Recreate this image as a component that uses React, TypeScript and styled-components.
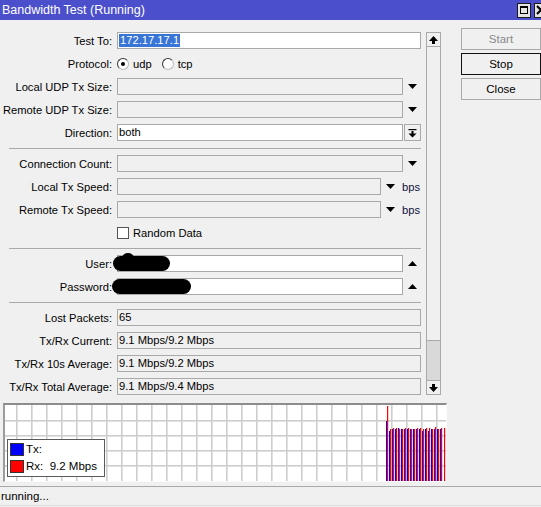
import React from "react";
import styled, { createGlobalStyle } from "styled-components";

const Global = createGlobalStyle`
  html, body { margin: 0; padding: 0; background: #f0f0f0; }
  * { box-sizing: border-box; }
`;

// tx / rx heights (px of a 76px tall plot)
const bars: [number, number][] = [
  [60, 75], [50, 52], [52, 53], [52, 53], [53, 52], [52, 52], [52, 53], [52, 53],
  [52, 52], [52, 52], [52, 53], [52, 53], [50, 52], [52, 53], [50, 53], [52, 52],
  [52, 54], [52, 52], [52, 53], [0, 53],
];

function DownArrow() {
  return (
    <svg width="9" height="6" viewBox="0 0 9 6">
      <polygon points="0,0 9,0 4.5,5" fill="#000" />
    </svg>
  );
}

function UpArrow() {
  return (
    <svg width="9" height="6" viewBox="0 0 9 6">
      <polygon points="0,5 9,5 4.5,0" fill="#000" />
    </svg>
  );
}

function BoldArrow({ down }: { down?: boolean }) {
  return (
    <svg width="9" height="8" viewBox="0 0 9 8" style={{ transform: down ? "rotate(180deg)" : undefined }}>
      <polygon points="4.5,0 9,5 6,5 6,8 3,8 3,5 0,5" fill="#000" />
    </svg>
  );
}

function DropAllIcon() {
  return (
    <svg width="9" height="10" viewBox="0 0 9 10">
      <rect x="0.5" y="1" width="8" height="1.2" fill="#000" />
      <rect x="3.5" y="3" width="2" height="3" fill="#000" />
      <polygon points="0.5,5.5 8.5,5.5 4.5,9.5" fill="#000" />
    </svg>
  );
}

function CloseGlyph() {
  return (
    <svg width="10" height="10" viewBox="0 0 10 10">
      <path d="M1 1 L9 9 M9 1 L1 9" stroke="#000" strokeWidth="2" />
    </svg>
  );
}

export default function App() {
  return (
    <Window>
      <Global />
      <TitleBar>
        <span>Bandwidth Test (Running)</span>
        <TitleButtons>
          <TitleBtn><MaxBox /></TitleBtn>
          <TitleBtn><CloseGlyph /></TitleBtn>
        </TitleButtons>
      </TitleBar>

      <Body>
        <FormPane>
          <FormColumn>
            <Row>
              <Label>Test To:</Label>
              <Field $white>
                <Selected>172.17.17.1</Selected>
              </Field>
            </Row>
            <Row>
              <Label>Protocol:</Label>
              <Radios>
                <RadioItem><Radio $on />udp</RadioItem>
                <RadioItem><Radio />tcp</RadioItem>
              </Radios>
            </Row>
            <Row>
              <Label>Local UDP Tx Size:</Label>
              <FieldLine>
                <Field />
                <ArrowSlot><DownArrow /></ArrowSlot>
              </FieldLine>
            </Row>
            <Row>
              <Label>Remote UDP Tx Size:</Label>
              <FieldLine>
                <Field />
                <ArrowSlot><DownArrow /></ArrowSlot>
              </FieldLine>
            </Row>
            <Row>
              <Label>Direction:</Label>
              <FieldLine>
                <Field $white>both</Field>
                <BoxButton><DropAllIcon /></BoxButton>
              </FieldLine>
            </Row>
            <Separator />
            <Row>
              <Label>Connection Count:</Label>
              <FieldLine>
                <Field />
                <ArrowSlot><DownArrow /></ArrowSlot>
              </FieldLine>
            </Row>
            <Row>
              <Label>Local Tx Speed:</Label>
              <FieldLine>
                <Field />
                <ArrowSlot><DownArrow /></ArrowSlot>
                <Unit>bps</Unit>
              </FieldLine>
            </Row>
            <Row>
              <Label>Remote Tx Speed:</Label>
              <FieldLine>
                <Field />
                <ArrowSlot><DownArrow /></ArrowSlot>
                <Unit>bps</Unit>
              </FieldLine>
            </Row>
            <Row>
              <span />
              <CheckLine><Check />Random Data</CheckLine>
            </Row>
            <Separator />
            <Row>
              <Label>User:</Label>
              <FieldLine>
                <Field $white />
                <ArrowSlot><UpArrow /></ArrowSlot>
              </FieldLine>
              <Blob $left={113} $width={57} />
              <Bump $left={122} />
            </Row>
            <Row>
              <Label>Password:</Label>
              <FieldLine>
                <Field $white />
                <ArrowSlot><UpArrow /></ArrowSlot>
              </FieldLine>
              <Blob $left={112} $width={79} />
            </Row>
            <Separator />
            <Row>
              <Label>Lost Packets:</Label>
              <Field>65</Field>
            </Row>
            <Row>
              <Label>Tx/Rx Current:</Label>
              <Field>9.1 Mbps/9.2 Mbps</Field>
            </Row>
            <Row>
              <Label>Tx/Rx 10s Average:</Label>
              <Field>9.1 Mbps/9.2 Mbps</Field>
            </Row>
            <Row>
              <Label>Tx/Rx Total Average:</Label>
              <Field>9.1 Mbps/9.4 Mbps</Field>
            </Row>
          </FormColumn>
          <Scrollbar>
            <ScrollBtn><BoldArrow /></ScrollBtn>
            <Track><Thumb /></Track>
            <ScrollBtn><BoldArrow down /></ScrollBtn>
          </Scrollbar>
        </FormPane>

        <ButtonColumn>
          <Button disabled>Start</Button>
          <Button $focused>Stop</Button>
          <Button>Close</Button>
        </ButtonColumn>
      </Body>

      <Chart>
        <svg width="441" height="76" viewBox="0 0 441 76">
          {Array.from({ length: 29 }, (_, i) => (
            <rect key={"v" + i} x={11 + i * 15} y={0} width={1.6} height={76} fill="#cdcdcd" />
          ))}
          {[15, 30, 45, 60].map((y) => (
            <rect key={"h" + y} x={0} y={y} width={441} height={1.6} fill="#cdcdcd" />
          ))}
          {bars.map(([tx, rx], i) => (
            <g key={i}>
              {tx > 0 && <rect x={381 + i * 3} y={76 - tx} width={1.2} height={tx} fill="#0000ff" />}
              <rect x={382 + i * 3} y={76 - rx} width={1.2} height={rx} fill="#ff0000" />
            </g>
          ))}
        </svg>
        <Legend>
          <LegendRow><Swatch $color="#0000ff" />Tx:</LegendRow>
          <LegendRow><Swatch $color="#ff0000" />{"Rx:  9.2 Mbps"}</LegendRow>
        </Legend>
      </Chart>

      <Status>running...</Status>
    </Window>
  );
}

const Window = styled.div`
  width: 541px;
  height: 507px;
  background: #f0f0f0;
  display: flex;
  flex-direction: column;
  overflow: hidden;
  font-family: "Liberation Sans", Arial, sans-serif;
  font-size: 11.2px;
  color: #000;
`;

const TitleBar = styled.div`
  height: 20px;
  flex: none;
  display: flex;
  align-items: center;
  padding-left: 2px;
  background: #4b4fcc;
  color: #fff;
  font-size: 12.5px;
  overflow: hidden;
`;

const TitleButtons = styled.div`
  margin-left: auto;
  margin-right: -7px;
  display: flex;
  gap: 3px;
`;

const TitleBtn = styled.div`
  width: 14px;
  height: 15px;
  border: 1px solid #1a1a1a;
  background: #e4e4e4;
  display: flex;
  align-items: center;
  justify-content: center;
`;

const MaxBox = styled.div`
  width: 8px;
  height: 8px;
  border: 1px solid #000;
  border-top-width: 2px;
`;

const Body = styled.div`
  display: flex;
  padding-top: 7px;
`;

const FormPane = styled.div`
  width: 445px;
  display: flex;
`;

const FormColumn = styled.div`
  width: 426px;
  padding: 5px 5px 0 0;
  display: flex;
  flex-direction: column;
  gap: 6px;
`;

const Row = styled.div`
  position: relative;
  display: grid;
  grid-template-columns: 112px 1fr;
  column-gap: 5px;
  height: 17px;
  align-items: center;
`;

const Label = styled.span`
  text-align: right;
  white-space: nowrap;
`;

const Field = styled.div<{ $white?: boolean }>`
  flex: 1;
  height: 17px;
  border: 1px solid #a9a9a9;
  background: ${(p) => (p.$white ? "#fff" : "#f0f0f0")};
  padding: 0 1px;
  line-height: 15px;
  white-space: nowrap;
  overflow: hidden;
`;

const Selected = styled.span`
  background: #3875d7;
  color: #fff;
  padding: 0 1px;
  display: inline-block;
  height: 13px;
  line-height: 13px;
  margin-top: 1px;
`;

const FieldLine = styled.div`
  display: flex;
  align-items: center;
  height: 17px;
`;

const ArrowSlot = styled.div`
  width: 18px;
  height: 17px;
  display: flex;
  align-items: center;
  justify-content: center;
  padding-top: 1px;
`;

const Unit = styled.span`
  width: 22px;
  padding-left: 3px;
  color: #101040;
`;

const BoxButton = styled.div`
  width: 17px;
  height: 17px;
  margin-left: 1px;
  border: 1px solid #a9a9a9;
  background: #f0f0f0;
  display: flex;
  align-items: center;
  justify-content: center;
`;

const Radios = styled.div`
  display: flex;
  align-items: center;
  gap: 10px;
`;

const RadioItem = styled.label`
  display: flex;
  align-items: center;
  gap: 4px;
`;

const Radio = styled.span<{ $on?: boolean }>`
  width: 12px;
  height: 12px;
  border-radius: 50%;
  border: 1px solid #333;
  border-right-color: #bbb;
  border-bottom-color: #bbb;
  background: #fff;
  display: flex;
  align-items: center;
  justify-content: center;
  &::after {
    content: "";
    width: 4px;
    height: 4px;
    border-radius: 50%;
    background: ${(p) => (p.$on ? "#000" : "transparent")};
  }
`;

const CheckLine = styled.label`
  display: flex;
  align-items: center;
  gap: 4px;
`;

const Check = styled.span`
  width: 12px;
  height: 12px;
  border: 1px solid #555;
  background: #fff;
`;

const Separator = styled.div`
  height: 1px;
  margin: 1px 0 0 9px;
  background: #a9a9a9;
`;

const Blob = styled.div<{ $left: number; $width: number }>`
  position: absolute;
  left: ${(p) => p.$left}px;
  top: 1px;
  width: ${(p) => p.$width}px;
  height: 15px;
  background: #000;
  border-radius: 8px;
`;

const Bump = styled.div<{ $left: number }>`
  position: absolute;
  left: ${(p) => p.$left}px;
  top: -2px;
  width: 12px;
  height: 10px;
  background: #000;
  border-radius: 50%;
`;

const Scrollbar = styled.div`
  width: 15px;
  height: 363px;
  margin-top: 5px;
  display: flex;
  flex-direction: column;
  border-left: 1px solid #a9a9a9;
  border-right: 1px solid #a9a9a9;
`;

const ScrollBtn = styled.div`
  height: 15px;
  flex: none;
  display: flex;
  align-items: center;
  justify-content: center;
  background: #f0f0f0;
  border-top: 1px solid #a9a9a9;
  border-bottom: 1px solid #a9a9a9;
`;

const Track = styled.div`
  flex: 1;
  display: flex;
  flex-direction: column;
  background: #f0f0f0;
`;

const Thumb = styled.div`
  margin-top: auto;
  height: 40px;
  background: #d9d9d9;
  border-top: 1px solid #a9a9a9;
`;

const ButtonColumn = styled.div`
  margin-left: 17px;
  padding-top: 1px;
  display: flex;
  flex-direction: column;
  gap: 3px;
`;

const Button = styled.button<{ $focused?: boolean }>`
  width: 80px;
  height: 22px;
  padding: 0;
  border: 1px solid ${(p) => (p.$focused ? "#111" : "#a9a9a9")};
  background: #f0f0f0;
  font-family: "Liberation Sans", Arial, sans-serif;
  font-size: 11.5px;
  color: #000;
  &:disabled {
    color: #8a8a8a;
  }
`;

const Chart = styled.div`
  position: relative;
  margin: 8px 0 0 3px;
  width: 444px;
  height: 79px;
  flex: none;
  background: #fff;
  border-style: solid;
  border-width: 2px 1px 1px 2px;
  border-color: #8c8c8c #fafafa #fafafa #9c9c9c;
  svg {
    display: block;
  }
`;

const Legend = styled.div`
  position: absolute;
  left: 2px;
  top: 34px;
  width: 98px;
  height: 38px;
  background: #fff;
  border: 1px solid #5a5a5a;
  padding: 2px 0 0 2px;
  display: flex;
  flex-direction: column;
  gap: 3px;
`;

const LegendRow = styled.div`
  display: flex;
  align-items: center;
  gap: 2px;
  height: 14px;
  white-space: pre;
  font-size: 11.5px;
`;

const Swatch = styled.span<{ $color: string }>`
  width: 14px;
  height: 13px;
  background: ${(p) => p.$color};
  border: 1px solid #333;
`;

const Status = styled.div`
  margin-top: 4px;
  border-top: 1px solid #a9a9a9;
  padding: 3px 0 0 1px;
  height: 20px;
  border-bottom: 1px solid #dcdcdc;
  white-space: nowrap;
  font-size: 11.5px;
`;
